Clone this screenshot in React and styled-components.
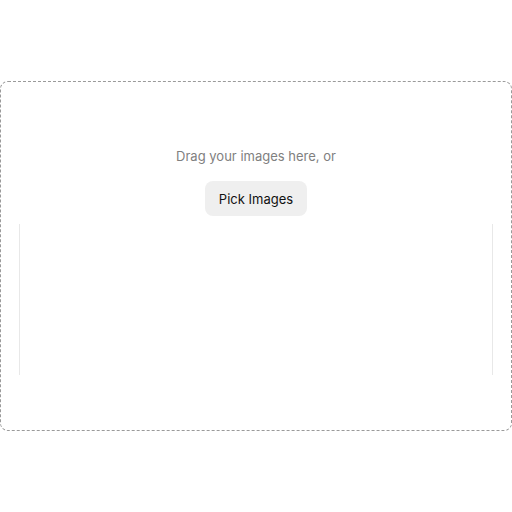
import React from 'react';
import styled, {createGlobalStyle} from 'styled-components';

const Global = createGlobalStyle`
  html, body {
    margin: 0;
    padding: 0;
    background: #fff;
    font-family: Inter, "Liberation Sans", sans-serif;
  }
  #root {
    height: 512px;
    display: flex;
    align-items: center;
  }
`;

const DropZone = styled.div`
    box-sizing: border-box;
    width: 512px;
    height: 350px;
    border: 1px dashed #9a9a9a;
    border-radius: 8px;
    padding: 64px 18px 55px;
    display: flex;
    flex-direction: column;
    align-items: center;
`;

const Hint = styled.div`
    font-size: 13px;
    line-height: 20px;
    color: #808080;
`;

const PickButton = styled.button`
    margin-top: 15px;
    height: 35px;
    padding: 0 14px;
    border: none;
    border-radius: 8px;
    background: #efefef;
    color: #111;
    font-family: inherit;
    font-size: 13px;
    cursor: pointer;
`;

const ImageList = styled.div`
    box-sizing: border-box;
    margin-top: 8px;
    align-self: stretch;
    flex: 1;
    border-left: 1px solid #e8e8e8;
    border-right: 1px solid #e8e8e8;
`;

function App(){
    return <>
        <Global />
        <DropZone>
            <Hint>Drag your images here, or</Hint>
            <PickButton>Pick Images</PickButton>
            <ImageList />
        </DropZone>
    </>
}

export default App;
